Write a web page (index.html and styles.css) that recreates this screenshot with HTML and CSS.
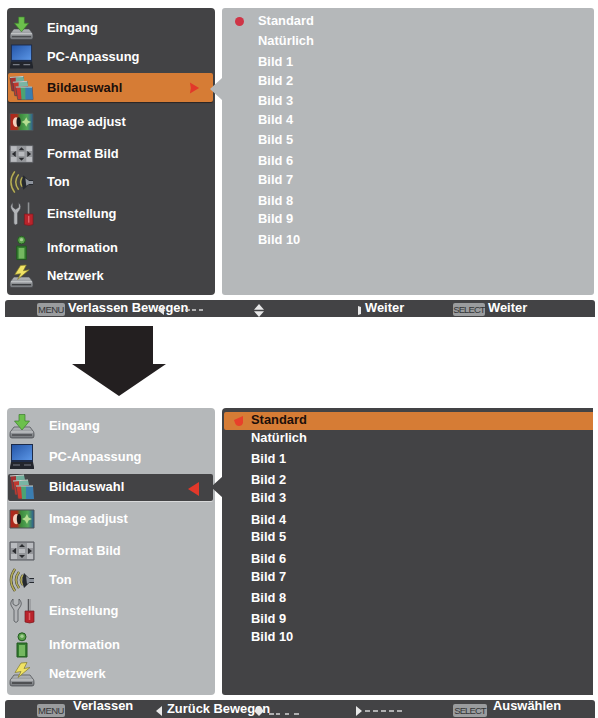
FILE: index.html
```
<!DOCTYPE html>
<html lang="de">
<head>
  <meta charset="UTF-8">
  <title>Bildauswahl</title>
  <link rel="stylesheet" href="styles.css">
</head>
<body>
  <svg class="defs" width="0" height="0">
    <defs>
      <linearGradient id="screen" x1="0" y1="0" x2="1" y2="1">
        <stop offset="0" stop-color="#2556a8"/><stop offset="1" stop-color="#5b96e6"/>
      </linearGradient>
      <linearGradient id="metal" x1="0" y1="0" x2="0" y2="1">
        <stop offset="0" stop-color="#b4b7ba"/><stop offset="1" stop-color="#74777b"/>
      </linearGradient>
      <linearGradient id="rg" x1="0" y1="0" x2="1" y2="0">
        <stop offset="0" stop-color="#b3241c"/><stop offset=".3" stop-color="#a5301c"/><stop offset=".45" stop-color="#3c8a3c"/><stop offset=".75" stop-color="#55a858"/><stop offset="1" stop-color="#2a5a94"/>
      </linearGradient>
    </defs>
    <symbol id="i-input" viewBox="0 0 26 26">
      <path d="M5 14h16l3 4q1 1 1 3v2q0 2-2 2H3q-2 0-2-2v-2q0-2 1-3z" fill="url(#metal)" class="edge"/>
      <path d="M2 19h22" stroke="#d0d2d4"/>
      <path d="M3 22h20" stroke="#4b4d50" stroke-width="1.500"/>
      <path d="M10 1.500h6V8h4.500L13 17 5.500 8H10z" fill="#6cc04c" stroke="#3b7d2c" stroke-width=".7"/>
    </symbol>
    <symbol id="i-pc" viewBox="0 0 26 26">
      <path d="M2 0h22v18H2z" fill="#1d2b49"/>
      <path d="M3 1h20v15H3z" fill="url(#screen)"/>
      <path d="M2 18h22l1 5v2H1v-2z" fill="#22252c"/>
      <path d="M4 21h7M15 21h7" stroke="#777b84" stroke-width="1.200"/>
    </symbol>
    <symbol id="i-select" viewBox="0 0 26 26">
      <path d="M1 2l14-1v15H3z" fill="#a32f2f" class="edge"/>
      <path d="M7 2l8-1 1 5-9 1z" fill="#6fae9b"/>
      <path d="M4 7l15-1 1 15H6z" fill="#c2382f" class="edge"/>
      <path d="M10 7l9-1 1 5-10 1z" fill="#79b5a4"/>
      <path d="M7 12h17l1 13H9z" fill="#cb3b31" class="edge"/>
      <path d="M12 12h6v13h-5z" fill="#4ca374"/>
      <path d="M17 12h7l1 13h-8z" fill="#3a7eb1"/>
      <path d="M1 2l14-1M4 7l15-1M7 12h17" stroke="#c9d2ce"/>
    </symbol>
    <symbol id="i-adjust" viewBox="0 0 26 26">
      <path d="M1 4h24v18H1z" fill="url(#rg)" stroke="#4d5254"/>
      <path d="M4 13c0-5 4-6 5-4v8c-2 3-5 0-5-4z" fill="#f4cfbd"/>
      <ellipse cx="10" cy="13" rx="2.200" ry="5" fill="#191919"/>
      <path d="M18 8l1.500 3.500L23 13l-3.500 1.500L18 18l-2-3.500-3-1.500 3-1.500z" fill="#b5dd91"/>
    </symbol>
    <symbol id="i-format" viewBox="0 0 26 26">
      <path d="M1 4h24v18H1z" fill="#94969a" stroke="#55575c"/>
      <path d="M2 5h6v5H2zM18 5h6v5h-6zM2 16h6v5H2zM18 16h6v5h-6zM10 11h6v4h-6z" fill="#b9bbbf"/>
      <path d="M3 13l4-3v6zM23 13l-4-3v6zM13 6l3 3h-6zM13 20l3-3h-6z" fill="#2b2c30"/>
    </symbol>
    <symbol id="i-sound" viewBox="0 0 26 26">
      <path d="M13 8q-4 5 0 10M9 5q-6 8 0 16M5 2q-8 11 0 22" fill="none" stroke="#4b4934" stroke-width="2.600" transform="translate(1)"/>
      <path d="M13 8q-4 5 0 10M9 5q-6 8 0 16M5 2q-8 11 0 22" fill="none" stroke="#b5ad58" stroke-width="1.500" transform="translate(1)"/>
      <path d="M15 6l5 5h5v5h-5l-5 5q-3-7 0-15z" fill="#25292f"/>
      <path d="M17 9l4 3h4v3h-4l-3 2z" fill="#8e949d"/>
    </symbol>
    <symbol id="i-setup" viewBox="0 0 26 26">
      <path d="M4 1v5l3 2 3-2V1q4 4 1 8l-2 3v11q-2 3-4 0V12L3 9Q0 5 4 1z" fill="#b3b5b8" class="edge"/>
      <path d="M20 1v13" stroke="#55575a" stroke-width="2.500"/>
      <path d="M20.500 1v13" stroke="#a1a3a5"/>
      <path d="M16 13h9v11q-4 2-9 0z" fill="#b9232b" stroke="#771b20" stroke-width=".7"/>
      <path d="M20.500 15v7" stroke="#df6065" stroke-width="1.500"/>
    </symbol>
    <symbol id="i-info" viewBox="0 0 26 26">
      <circle cx="13" cy="4.800" r="4" fill="#5aa14b" stroke="#21591f"/>
      <circle cx="13" cy="4.300" r="1.700" fill="#a3ce92"/>
      <path d="M8 11h10v14H8z" fill="#347d31" stroke="#21591f"/>
      <path d="M10 13h6v11h-6z" fill="#74b860"/>
    </symbol>
    <symbol id="i-net" viewBox="0 0 26 26">
      <path d="M5 13h16l3 4q1 1 1 3v2q0 2-2 2H3q-2 0-2-2v-2q0-2 1-3z" fill="url(#metal)" class="edge"/>
      <path d="M2 18h22" stroke="#d0d2d4"/>
      <path d="M3 21h20" stroke="#3c3e41" stroke-width="1.500"/>
      <path d="M12 1l6-.5-3 6 6-1-12 10 3-6-6 1z" fill="#f0e264" stroke="#827b2a" stroke-width=".7"/>
    </symbol>
  </svg>

  <div class="osd first">
    <div class="panels">
      <ul class="menu dark">
        <li><svg class="icon"><use href="#i-input"/></svg>Eingang</li>
        <li><svg class="icon"><use href="#i-pc"/></svg>PC-Anpassung</li>
        <li class="current"><svg class="icon"><use href="#i-select"/></svg>Bildauswahl
          <svg class="mark" viewBox="0 0 12 14"><path d="M1 1l10 6L1 13l1-6z"/></svg></li>
        <li><svg class="icon"><use href="#i-adjust"/></svg>Image adjust</li>
        <li><svg class="icon"><use href="#i-format"/></svg>Format Bild</li>
        <li><svg class="icon"><use href="#i-sound"/></svg>Ton</li>
        <li><svg class="icon"><use href="#i-setup"/></svg>Einstellung</li>
        <li><svg class="icon"><use href="#i-info"/></svg>Information</li>
        <li><svg class="icon"><use href="#i-net"/></svg>Netzwerk</li>
      </ul>
      <ul class="options light">
        <li class="selected"><span class="dot"></span>Standard</li>
        <li>Natürlich</li>
        <li>Bild 1</li>
        <li>Bild 2</li>
        <li>Bild 3</li>
        <li>Bild 4</li>
        <li>Bild 5</li>
        <li>Bild 6</li>
        <li>Bild 7</li>
        <li>Bild 8</li>
        <li>Bild 9</li>
        <li>Bild 10</li>
      </ul>
    </div>
    <div class="bar">
      <div class="cell"><span class="key menu-key">MENU</span>Verlassen Bewegen<svg class="under" viewBox="0 0 46 12"><path d="M6 2v9L0 6.500z"/><path d="M27 6h5M34 6h4M41 6h4" class="dash"/></svg></div>
      <div class="cell"><svg class="updown" viewBox="0 0 12 13"><path d="M6 0l5 5.800H1zM1 7.200h10L6 13z"/></svg></div>
      <div class="cell"><svg class="stub" viewBox="0 0 4 9"><path d="M0 0l3 1v7l-3 1z"/></svg>Weiter</div>
      <div class="cell"><span class="key">SELECT</span>Weiter</div>
    </div>
  </div>

  <svg class="arrow" viewBox="0 0 94 70"><path d="M13 0h68v38h13L47 70 0 38h13z"/></svg>

  <div class="osd second">
    <div class="panels">
      <ul class="menu light">
        <li><svg class="icon"><use href="#i-input"/></svg>Eingang</li>
        <li><svg class="icon"><use href="#i-pc"/></svg>PC-Anpassung</li>
        <li class="current"><svg class="icon"><use href="#i-select"/></svg>Bildauswahl
          <svg class="mark" viewBox="0 0 12 14"><path d="M11 0v14L0 7z"/></svg></li>
        <li><svg class="icon"><use href="#i-adjust"/></svg>Image adjust</li>
        <li><svg class="icon"><use href="#i-format"/></svg>Format Bild</li>
        <li><svg class="icon"><use href="#i-sound"/></svg>Ton</li>
        <li><svg class="icon"><use href="#i-setup"/></svg>Einstellung</li>
        <li><svg class="icon"><use href="#i-info"/></svg>Information</li>
        <li><svg class="icon"><use href="#i-net"/></svg>Netzwerk</li>
      </ul>
      <ul class="options dark">
        <li class="selected"><svg class="dot" viewBox="0 0 10 10"><path d="M9 0v7q-1 3-4 3T1 7L0 4z"/></svg>Standard</li>
        <li>Natürlich</li>
        <li>Bild 1</li>
        <li>Bild 2</li>
        <li>Bild 3</li>
        <li>Bild 4</li>
        <li>Bild 5</li>
        <li>Bild 6</li>
        <li>Bild 7</li>
        <li>Bild 8</li>
        <li>Bild 9</li>
        <li>Bild 10</li>
      </ul>
    </div>
    <div class="bar">
      <div class="cell"><span class="key menu-key">MENU</span><span class="raised">Verlassen</span></div>
      <div class="cell"><svg class="tri" viewBox="0 0 6 10"><path d="M6 0v10L0 5z"/></svg>Zurück Bewegen<svg class="under" viewBox="0 0 46 14"><path d="M5 1l5 5-5 5-5-5z"/><path d="M15 9h5M22 9h4M31 9h4M40 9h5" class="dash"/></svg></div>
      <div class="cell"><svg class="tri" viewBox="0 0 6 10"><path d="M0 0v10l6-5z"/></svg><svg class="dashes" viewBox="0 0 37 4"><path d="M0 2h5M8 2h5M16 2h5M24 2h5M32 2h5" class="dash"/></svg></div>
      <div class="cell"><span class="key">SELECT</span><span class="raised">Auswählen</span></div>
    </div>
  </div>
</body>
</html>
```
FILE: styles.css
```
body { margin: 0; padding: 8px 0 0 5px; background: #fff; font: bold 12.9px/16px "Liberation Sans", Arial, sans-serif; color: #fff; height: 710px; overflow: hidden; }
ul { list-style: none; margin: 0; padding: 0; box-sizing: border-box; }
.defs { position: absolute; }
.edge { stroke: #44464a; stroke-width: .7; }

.osd { width: 590px; }
.panels { display: flex; gap: 7px; padding-left: 2px; height: 287px; }
.dark { background: #434345; }
.light { background: #b5b8ba; }
li { display: flex; align-items: center; white-space: nowrap; }

.menu { width: 208px; border-radius: 4px; display: grid; align-content: start; }
.menu li { padding-left: 2px; }
.icon { width: 26px; height: 26px; margin: -5px 12px -5px 0; flex: none; }
.mark { width: 11px; height: 14px; margin-left: auto; fill: #e2382a; }
.current { margin: 0 2px 0 1px; border-radius: 2px; }
.menu .current { padding-left: 1px; padding-right: 13px; }

.first .menu { padding-top: 6px; grid-template-rows: 27px 32px 29px 40px 23px 34px 29px 40px 16px; }
.first .icon { width: 25px; margin-right: 13px; }
.first .current { background: #d67c35; color: #1c0f0a; box-shadow: 0 1px 1px #2b2523; }
.second .menu { padding-top: 4px; grid-template-rows: 28px 34px 27px 36px 27px 32px 30px 38px 20px; }
.second .icon { margin-right: 14px; }
.menu li:last-child .icon { position: relative; top: 1px; }
.second .current { background: #434345; box-shadow: 0 1px 0 #d9dadb; padding-bottom: 2px; box-sizing: border-box; }
.second .current .mark { width: 12px; position: relative; top: 2px; }

.options { position: relative; width: 372px; border-radius: 3px; display: grid; align-content: start; }
/* notch that ties the list to the current menu row */
.options::before { content: ""; position: absolute; left: -12px; top: 70px; width: 12px; height: 22px; background: inherit; clip-path: polygon(100% 0, 100% 100%, 0 50%); }
.second .options::before { top: 68px; left: -11px; }
.options li { padding-left: 36px; }
.options .selected { padding-left: 13px; }
.dot { width: 9px; height: 9px; margin-right: 14px; flex: none; }
.first .dot { background: #cf3446; border-radius: 50%; position: relative; top: 1px; }
.first .options { padding-top: 2px; grid-template-rows: 21px 20px 21px 17px 24px 13px 28px 14px 24px 18px 17px 25px; }
.second .options { width: 371px; border-radius: 4px 0 0 3px; padding-top: 4px; grid-template-rows: 18px 16px 26px 15px 22px 21px 14px 30px 6px 35px 8px 28px; }
.second .options li { padding-left: 29px; }
.second .options .selected { margin-left: 2px; padding-left: 10px; padding-bottom: 2px; background: #d67c35; color: #1c0f0a; box-sizing: border-box; height: 18px; border-radius: 2px 0 0 2px; }
.second .dot { width: 10px; height: 10px; margin-right: 7px; fill: #e8402a; position: relative; top: 1px; }

.bar { margin-top: 5px; height: 17px; background: #434345; border-radius: 3px 3px 0 0; display: grid; padding-left: 32px; fill: #e8e8e8; }
.first .bar { grid-template-columns: 216px 103px 97px 1fr; }
.second .bar { height: 18px; grid-template-columns: 119px 200px 97px 1fr; }
.cell { position: relative; display: flex; align-items: center; white-space: nowrap; height: 15px; }
.second .cell { height: 17px; }
.key { box-sizing: border-box; width: 32px; height: 13px; margin: 4px 3px 0 0; border-radius: 2px; background: #9a9c9e; color: #333436; font-size: 9.5px; font-weight: normal; line-height: 13px; text-align: center; letter-spacing: -.9px; flex: none; }
.menu-key { width: 28px; letter-spacing: -.5px; }
.second .key { width: 34px; margin-right: 6px; }
.second .menu-key { width: 28px; margin-right: 8px; }
.raised { padding-bottom: 5px; }
.dash { stroke: #d5d5d5; stroke-width: 1.500; }
.under { position: absolute; left: 121px; top: 4px; width: 46px; height: 12px; }
.second .under { left: 98px; top: 5px; height: 14px; }
.updown { width: 12px; height: 13px; margin-top: 5px; }
.stub { width: 4px; height: 9px; margin: 6px 3px 0 2px; }
.tri { width: 6px; height: 10px; margin: 4px 5px 0 0; }
.second .cell:nth-child(3) .tri { margin-right: 3px; }
.dashes { width: 37px; height: 4px; margin-top: 5px; }

.arrow { display: block; width: 94px; height: 70px; margin: 9px 0 12px 67px; fill: #231f20; }
```
